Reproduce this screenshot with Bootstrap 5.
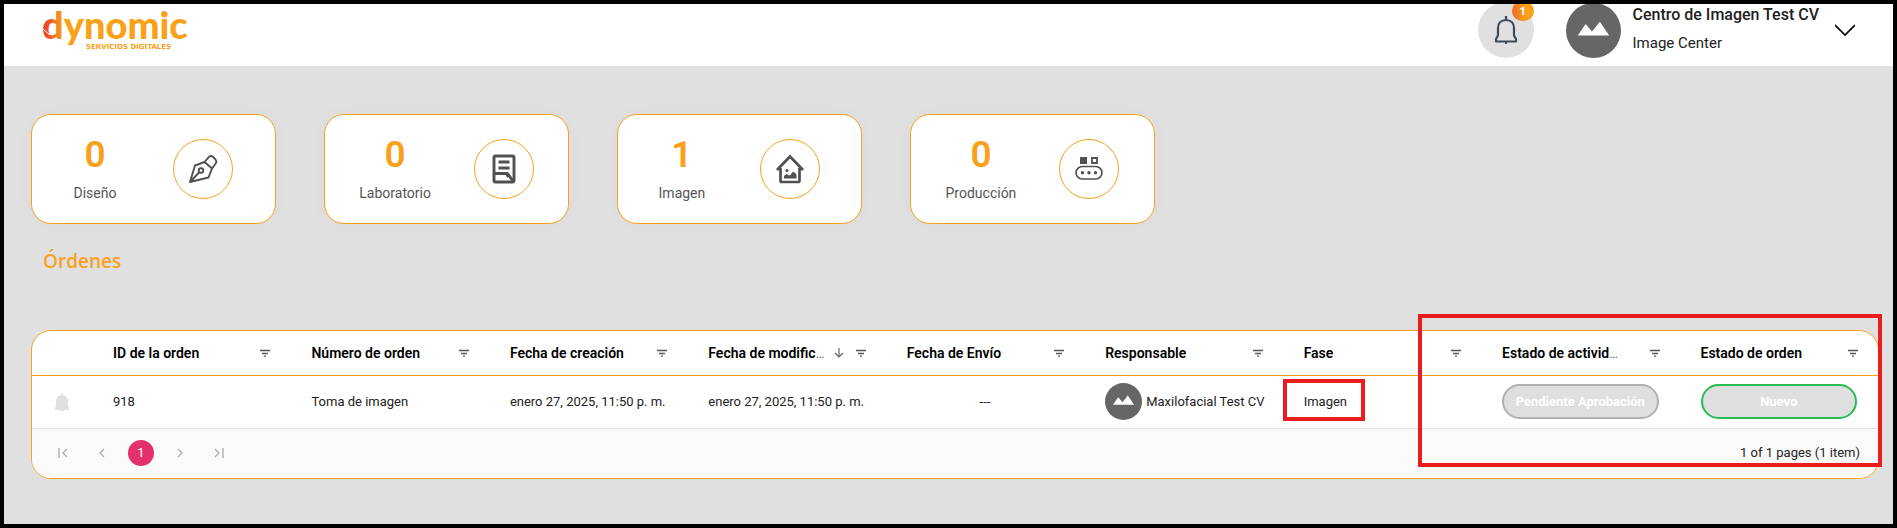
<!DOCTYPE html>
<html lang="es">
<head>
<meta charset="utf-8">
<meta name="viewport" content="width=device-width, initial-scale=1">
<title>Dynomic - Órdenes</title>
<link href="https://cdn.jsdelivr.net/npm/bootstrap@5.3.0/dist/css/bootstrap.min.css" rel="stylesheet">
<style>
  :root { --brand: #f9a11b; --ink: #222; --page: #e0e0e0; }
  body { font-family: Roboto, "Liberation Sans", sans-serif; color: var(--ink); background: var(--page); border: 4px solid #000; font-size: 13px; line-height: 20px; }
  svg { display: block; flex: none; }
  .topbar { height: 62px; padding: 0 38px 10px 39px; }
  .brand-logo { overflow: visible; }
  .notify { width: 56px; height: 56px; background: #e0e0e0; margin-right: 32px; }
  .notify-count { top: -1px; right: 0; width: 22px; height: 20px; border-radius: 10px; background: linear-gradient(90deg, #f1672a, #f9a11b 60%); color: #fff; font: 700 11px/20px "Open Sans", sans-serif; }
  .avatar { background: #666; border-radius: 50%; flex: none; }
  .avatar-lg { width: 55px; height: 55px; }
  .avatar-sm { width: 37px; height: 37px; }
  .user-text { padding-bottom: 2px; }
  .user-name { font-size: 16px; line-height: 28px; font-weight: 500; color: #212121; }
  .user-role { font-size: 15px; line-height: 28px; }
  .content { padding: 48px 14px 45px 27px; }
  .stats { gap: 48px; }
  .stat { flex: 0 1 245px; height: 110px; padding: 0 13px; border: 1px solid var(--brand); border-radius: 20px; background: #fff; box-shadow: 0 0 20px rgba(0,0,0,.03); }
  .stat-value { font-size: 37px; line-height: 44px; font-weight: 600; color: var(--brand); padding-bottom: 4px; }
  .stat-label { font-size: 14px; line-height: 24px; color: #555; }
  .stat-icon { width: 60px; height: 60px; border: 1px solid var(--brand); color: #505050; }
  .section-title { font: 600 19px/28px "Open Sans", sans-serif; color: var(--brand); padding-left: 12px; margin: 23px 0 55px; }
  .orders { border: 1px solid var(--brand); border-radius: 20px; background: #fff; }
  .orders-grid { table-layout: fixed; width: 100%; }
  .orders-grid th, .orders-grid td { padding: 0 21px; }
  .orders-grid th { height: 44px; padding-right: 20px; padding-top: 1px; border-bottom: 1px solid var(--brand); font-weight: 400; color: #666; }
  .orders-grid td { height: 53px; border-bottom: 1px solid var(--page); white-space: nowrap; }
  .col-alert { width: 60px; }
  .head-text { font-size: 14px; font-weight: 600; color: #000; }
  .head-gap { padding-left: 30px; }
  .status { height: 35px; border: 2px solid #b0b0b0; border-radius: 18px; background: #dfdfdf; color: #fff; font-size: 13px; font-weight: 700; padding: 0; line-height: 20px; }
  .status-new { border-color: #27bd54; }
  .pager { height: 49px; background: #fafafa; border-radius: 0 0 19px 19px; padding: 0 18px; }
  .page-btn { width: 26px; height: 26px; border: 0; padding: 0; background: none; color: #b0b0b0; }
  .page-btn.current { background: #e3316b; color: #fff; }
  .pages { gap: 13px; }
  .callout-box { border: 4px solid #ea1c1c; pointer-events: none; }
  .callout-status { top: -17px; right: -4px; bottom: 11px; width: 464px; }
  .callout-phase { top: -13px; right: -18px; bottom: -9px; left: -21px; }
</style>
</head>
<body class="min-vh-100">
<svg class="d-none" aria-hidden="true">
  <symbol id="i-filter" viewBox="0 0 10 8"><path d="M0 1.5h10M2 4.5h6M4 7.2h2" stroke="#555" stroke-width="1.3" fill="none"/></symbol>
  <symbol id="i-person" viewBox="0 0 56 56"><path d="M12 33 L20 21.5 L26.500 29 L34.500 19 L44 33z" fill="#fff"/></symbol>
</svg>

<header class="topbar bg-white d-flex align-items-center overflow-hidden">
  <a href="#" aria-label="Dynomic Servicios Digitales" class="me-auto">
    <svg class="brand-logo" width="150" height="44" viewBox="0 0 150 44">
      <defs><linearGradient id="mark" gradientUnits="userSpaceOnUse" x1="0" y1="0" x2="20" y2="0"><stop offset="0" stop-color="#e7372b"/><stop offset="1" stop-color="#f9a11b"/></linearGradient></defs>
      <text x="-1" y="31" font-family="Lato, sans-serif" font-weight="900" font-size="38" fill="url(#mark)">dynomic</text>
      <path d="M0 21l7 6" stroke="#fff" stroke-width="1"/>
      <text x="43" y="41" font-family="DejaVu Sans, sans-serif" font-weight="700" font-size="7" fill="#f9a11b">SERVICIOS DIGITALES</text>
    </svg>
  </a>
  <button type="button" class="notify btn p-0 border-0 rounded-circle position-relative d-flex align-items-center justify-content-center flex-shrink-0" aria-label="Notificaciones">
    <svg width="24" height="30" viewBox="0 0 24 30" fill="none" stroke="#3f4a59" stroke-width="2.200" stroke-linejoin="round"><path d="M12 1v4M12 5c-5 0-8 3.500-8 8v7.500L2 24v2.500h20V24l-2-3.500V13c0-4.500-3-8-8-8zM11 28h2"/></svg>
    <span class="notify-count position-absolute">1</span>
  </button>
  <div class="avatar avatar-lg me-2"><svg width="55" height="55"><use href="#i-person"/></svg></div>
  <div class="user-text ps-1 text-nowrap">
    <div class="user-name">Centro de Imagen Test CV</div>
    <div class="user-role">Image Center</div>
  </div>
  <button type="button" class="btn p-0 border-0 ms-3" aria-label="Abrir menú"><svg width="20" height="12" viewBox="0 0 20 12" fill="none" stroke="#000" stroke-width="1.700"><path d="M0 1l10 10L20 1"/></svg></button>
</header>

<main class="content">
  <section class="stats d-flex">
    <div class="stat d-flex align-items-center justify-content-around">
      <div class="text-center"><div class="stat-value">0</div><div class="stat-label">Diseño</div></div>
      <div class="stat-icon rounded-circle d-flex align-items-center justify-content-center">
        <svg width="30" height="30" viewBox="0 0 30 30" fill="none" stroke="currentColor" stroke-width="1.900" stroke-linejoin="round"><path d="M2 28L7 11.500L16.500 8L24 14.500L20.500 23.500zM2 28L11.500 18"/><circle cx="13" cy="16.500" r="2.300"/><path d="M16.500 8l4.500-5.200q2-1.600 3.600-.3l3 3.200q1.500 2 0 3.800L24 14.500"/></svg>
      </div>
    </div>
    <div class="stat d-flex align-items-center justify-content-around">
      <div class="text-center"><div class="stat-value">0</div><div class="stat-label">Laboratorio</div></div>
      <div class="stat-icon rounded-circle d-flex align-items-center justify-content-center">
        <svg width="24" height="30" viewBox="0 0 24 30" fill="none" stroke="currentColor" stroke-width="2.900" stroke-linejoin="round"><rect x="2" y="2" width="20" height="26" rx="1.500"/><path d="M6.500 8h11M6.500 14h11M2 19.500h13.500L21 27M14.500 19.500l2 3.500"/></svg>
      </div>
    </div>
    <div class="stat d-flex align-items-center justify-content-around">
      <div class="text-center"><div class="stat-value">1</div><div class="stat-label">Imagen</div></div>
      <div class="stat-icon rounded-circle d-flex align-items-center justify-content-center">
        <svg width="28" height="30" viewBox="0 0 28 30"><path d="M1 16L14 2.500L27 16M4.500 14v12.500q0 1.500 1.500 1.500h16q1.500 0 1.500-1.500V14" fill="none" stroke="currentColor" stroke-width="2.700"/><path d="M8 24.500v-2.500l2.500-2 2.500 1.500 1.500-.5 2-3 2.500.5 1.500 2.500v3.500z" fill="currentColor"/><circle cx="11" cy="16.500" r="1.500" fill="currentColor"/></svg>
      </div>
    </div>
    <div class="stat d-flex align-items-center justify-content-around">
      <div class="text-center"><div class="stat-value">0</div><div class="stat-label">Producción</div></div>
      <div class="stat-icon rounded-circle d-flex align-items-center justify-content-center">
        <svg width="28" height="26" viewBox="0 0 28 26"><path d="M5 1h7v7H5z" fill="currentColor"/><path d="M17 2h5v5h-5z" fill="none" stroke="currentColor" stroke-width="1.800"/><rect x="1" y="10.500" width="26" height="12.500" rx="6.200" fill="none" stroke="currentColor" stroke-width="1.700"/><g fill="currentColor"><circle cx="7.500" cy="16.700" r="1.700"/><circle cx="14" cy="16.700" r="1.700"/><circle cx="20.500" cy="16.700" r="1.700"/></g></svg>
      </div>
    </div>
  </section>

  <h1 class="section-title">Órdenes</h1>

  <section class="orders position-relative">
    <table class="orders-grid">
      <colgroup><col class="col-alert"><col span="9"></colgroup>
      <thead>
        <tr>
          <th></th>
          <th><div class="d-flex align-items-center"><div class="text-truncate me-auto"><span class="head-text">ID de la orden</span></div><svg width="10" height="8"><use href="#i-filter"/></svg></div></th>
          <th><div class="d-flex align-items-center"><div class="text-truncate me-auto"><span class="head-text">Número de orden</span></div><svg width="10" height="8"><use href="#i-filter"/></svg></div></th>
          <th><div class="d-flex align-items-center"><div class="text-truncate me-auto"><span class="head-text">Fecha de creación</span></div><svg width="10" height="8"><use href="#i-filter"/></svg></div></th>
          <th><div class="d-flex align-items-center"><div class="text-truncate me-auto"><span class="head-text">Fecha de modific</span>…</div><svg class="mx-2" width="10" height="10" viewBox="0 0 10 10" fill="none" stroke="#666" stroke-width="1.200"><path d="M5 0v9M1 5l4 4 4-4"/></svg><svg class="ms-1" width="10" height="8"><use href="#i-filter"/></svg></div></th>
          <th><div class="d-flex align-items-center"><div class="text-truncate me-auto"><span class="head-text">Fecha de Envío</span></div><svg width="10" height="8"><use href="#i-filter"/></svg></div></th>
          <th><div class="d-flex align-items-center"><div class="text-truncate me-auto"><span class="head-text">Responsable</span></div><svg width="10" height="8"><use href="#i-filter"/></svg></div></th>
          <th><div class="d-flex align-items-center"><div class="text-truncate me-auto"><span class="head-text">Fase</span></div><svg width="10" height="8"><use href="#i-filter"/></svg></div></th>
          <th><div class="d-flex align-items-center"><div class="text-truncate me-auto"><span class="head-text">Estado de activid</span>…</div><svg width="10" height="8"><use href="#i-filter"/></svg></div></th>
          <th><div class="d-flex align-items-center"><div class="text-truncate me-auto"><span class="head-text">Estado de orden</span></div><svg width="10" height="8"><use href="#i-filter"/></svg></div></th>
        </tr>
      </thead>
      <tbody>
        <tr>
          <td class="px-0"><svg class="mx-auto" width="14" height="18" viewBox="0 0 14 18"><path d="M6.300 0h1.400v2.200C11 2.500 13 5 13 8v5l1 2v2H8.500v1h-3v-1H0v-2l1-2V8c0-3 2-5.500 5.300-5.800z" fill="#e0e0e0"/></svg></td>
          <td>918</td>
          <td>Toma de imagen</td>
          <td>enero 27, 2025, 11:50 p. m.</td>
          <td>enero 27, 2025, 11:50 p. m.</td>
          <td class="text-center">---</td>
          <td class="pe-0"><div class="d-flex align-items-center gap-1"><div class="avatar avatar-sm"><svg width="37" height="37"><use href="#i-person"/></svg></div><span>Maxilofacial Test CV</span></div></td>
          <td><span class="position-relative d-inline-block">Imagen<span class="callout-box callout-phase position-absolute"></span></span></td>
          <td><button type="button" class="status d-block w-100">Pendiente Aprobación</button></td>
          <td><button type="button" class="status status-new d-block w-100">Nuevo</button></td>
        </tr>
      </tbody>
    </table>
    <footer class="pager d-flex align-items-center justify-content-between">
      <nav class="pages d-flex" aria-label="Paginación">
        <button type="button" class="page-btn" aria-label="Primera"><svg class="mx-auto" width="10" height="10" viewBox="0 0 10 10" fill="none" stroke="currentColor" stroke-width="1.400"><path d="M1 0v10M9 1L5 5l4 4"/></svg></button>
        <button type="button" class="page-btn" aria-label="Anterior"><svg class="mx-auto" width="10" height="10" viewBox="0 0 10 10" fill="none" stroke="currentColor" stroke-width="1.400"><path d="M7 1L3 5l4 4"/></svg></button>
        <button type="button" class="page-btn current rounded-circle">1</button>
        <button type="button" class="page-btn" aria-label="Siguiente"><svg class="mx-auto" width="10" height="10" viewBox="0 0 10 10" fill="none" stroke="currentColor" stroke-width="1.400"><path d="M3 1l4 4-4 4"/></svg></button>
        <button type="button" class="page-btn" aria-label="Última"><svg class="mx-auto" width="10" height="10" viewBox="0 0 10 10" fill="none" stroke="currentColor" stroke-width="1.400"><path d="M9 0v10M1 1l4 4-4 4"/></svg></button>
      </nav>
      <span>1 of 1 pages (1 item)</span>
    </footer>
    <div class="callout-box callout-status position-absolute"></div>
  </section>
</main>
<script src="https://cdn.jsdelivr.net/npm/bootstrap@5.3.0/dist/js/bootstrap.bundle.min.js"></script>
</body>
</html>
